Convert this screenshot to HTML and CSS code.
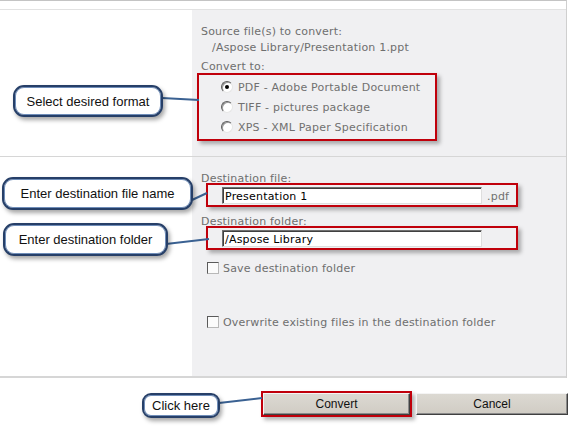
FILE: index.html
```
<!DOCTYPE html>
<html>
<head>
<meta charset="utf-8">
<link rel="stylesheet" href="styles.css">
</head>
<body>
<div class="page">
  <div class="form">
    <div class="topgap"></div>
    <section class="row row-format">
      <div class="side"></div>
      <div class="panel">
        <div class="label">Source file(s) to convert:</div>
        <div class="label path">/Aspose Library/Presentation 1.ppt</div>
        <div class="label convert-to">Convert to:</div>
        <div class="hl format-box">
          <div class="opt"><span class="radio checked"></span><span>PDF - Adobe Portable Document</span></div>
          <div class="opt"><span class="radio"></span><span>TIFF - pictures package</span></div>
          <div class="opt"><span class="radio"></span><span>XPS - XML Paper Specification</span></div>
        </div>
      </div>
    </section>
    <section class="row row-dest">
      <div class="side"></div>
      <div class="panel">
        <div class="label tight">Destination file:</div>
        <div class="hl field-box">
          <div class="input">Presentation 1</div>
          <span class="ext">.pdf</span>
        </div>
        <div class="label tight folder-label">Destination folder:</div>
        <div class="hl field-box">
          <div class="input">/Aspose Library</div>
        </div>
        <div class="check save"><span class="box"></span><span>Save destination folder</span></div>
        <div class="check overwrite"><span class="box"></span><span>Overwrite existing files in the destination folder</span></div>
      </div>
    </section>
  </div>
  <div class="actions">
    <div class="hl btn-box"><div class="btn">Convert</div></div>
    <div class="btn cancel">Cancel</div>
  </div>

  <svg class="connectors" width="569" height="430" viewBox="0 0 569 430">
    <line x1="162" y1="98" x2="199" y2="100"/>
    <line x1="192" y1="200" x2="207" y2="193"/>
    <line x1="166" y1="244" x2="209" y2="239"/>
    <line x1="219" y1="403" x2="262" y2="398"/>
  </svg>
  <div class="callout c1">Select desired format</div>
  <div class="callout c2">Enter destination file name</div>
  <div class="callout c3">Enter destination folder</div>
  <div class="callout c4">Click here</div>
</div>
</body>
</html>
```

FILE: styles.css
```
* { box-sizing: border-box; }
html, body { margin: 0; padding: 0; background: #ffffff; }
body { font-family: "DejaVu Sans", Verdana, sans-serif; font-size: 11px; color: #6e6e6e; }

.page { position: relative; width: 569px; height: 430px; overflow: hidden; }

.form {
  width: 567px;
  border-top: 1px solid #c4c4c4;
  border-right: 1px solid #cfcfcf;
}
.topgap { height: 9px; border-bottom: 1px solid #e2e2e2; }

.row { display: flex; }
.row-format { height: 147px; border-bottom: 1px solid #d6d6d6; }
.row-dest { height: 221px; border-bottom: 2px solid #d6d6d6; }
.side { width: 192px; flex: none; background: #fff; }
.panel { flex: 1; background: #f0f0f2; padding-left: 9px; letter-spacing: 0.2px; }
.row-format .panel { padding-top: 14px; }
.row-dest .panel { padding-top: 15px; }

.label { line-height: 16px; white-space: nowrap; }
.label.tight { line-height: 13px; margin-bottom: -2px; }
.path { padding-left: 11px; }
.convert-to { margin-top: 3px; margin-bottom: -2px; }
.folder-label { margin-top: 8px; }

.hl {
  border: 2px solid #c0000b;
  box-shadow: 3px 3px 4px rgba(0,0,0,0.30);
}
.format-box {
  width: 240px; height: 68px;
  margin-left: -4px;
  padding: 2px 0 2px 22px;
}
.opt { display: flex; align-items: center; height: 20px; gap: 5px; color: #707070; }

.radio {
  width: 12px; height: 12px; border-radius: 50%;
  background: #fff;
  border: 1px solid;
  border-color: #5c5c5c #e6e6e6 #e6e6e6 #5c5c5c;
  box-shadow: inset 1px 1px 0 #9a9a9a;
  position: relative; flex: none;
}
.radio.checked::after {
  content: ""; position: absolute; left: 3px; top: 3px;
  width: 4px; height: 4px; border-radius: 50%; background: #000;
}

.field-box {
  width: 312px; height: 24px;
  margin-left: 5px;
  padding: 2px 0 0 14px;
  display: flex; align-items: flex-start; gap: 5px;
}
.input {
  width: 260px; height: 17px;
  background: #fff;
  border: 1px solid;
  border-color: #6f6f6f #dedede #dedede #6f6f6f;
  box-shadow: inset 1px 1px 0 #404040;
  color: #000;
  line-height: 17px;
  padding-left: 2px;
  white-space: nowrap;
}
.ext { line-height: 19px; color: #707070; }

.check { display: flex; align-items: center; gap: 4px; height: 16px; margin-left: 6px; white-space: nowrap; }
.check.save { margin-top: 10px; }
.check.overwrite { margin-top: 38px; }
.box {
  width: 12px; height: 12px; flex: none;
  background: #fbfbfb;
  border: 1px solid;
  border-color: #5a5a5a #b8b8b8 #b8b8b8 #5a5a5a;
}

.actions { display: flex; align-items: flex-start; padding: 13px 0 0 261px; gap: 4px; }
.btn-box { width: 151px; height: 26px; }
.btn {
  height: 22px;
  background: linear-gradient(#dcd9d2, #d0ccc4);
  border: 1px solid;
  border-color: #f4f4f4 #404040 #404040 #f4f4f4;
  box-shadow: inset -1px -1px 0 #8a8a8a;
  font-family: "Liberation Sans", Arial, sans-serif;
  font-size: 12px; color: #111;
  display: flex; align-items: center; justify-content: center;
}
.cancel { width: 152px; margin-top: 2px; }

.connectors { position: absolute; left: 0; top: 0; pointer-events: none; }
.connectors line { stroke: #3a6192; stroke-width: 2; }

.callout {
  position: absolute;
  display: flex; align-items: center; justify-content: center;
  background: #fff;
  border: 2px solid #263f68;
  border-radius: 11px;
  box-shadow: 2px 3px 4px rgba(0,0,0,0.35), inset 0 0 0 1px #6f8db8;
  font-family: "Liberation Sans", Arial, sans-serif;
  font-size: 13px; color: #111;
  white-space: nowrap;
}
.c1 { left: 13px; top: 85px; width: 150px; height: 32px; }
.c2 { left: 2px; top: 177px; width: 191px; height: 33px; }
.c3 { left: 3px; top: 223px; width: 165px; height: 33px; }
.c4 { left: 142px; top: 393px; width: 78px; height: 25px; border-radius: 9px; }
```
